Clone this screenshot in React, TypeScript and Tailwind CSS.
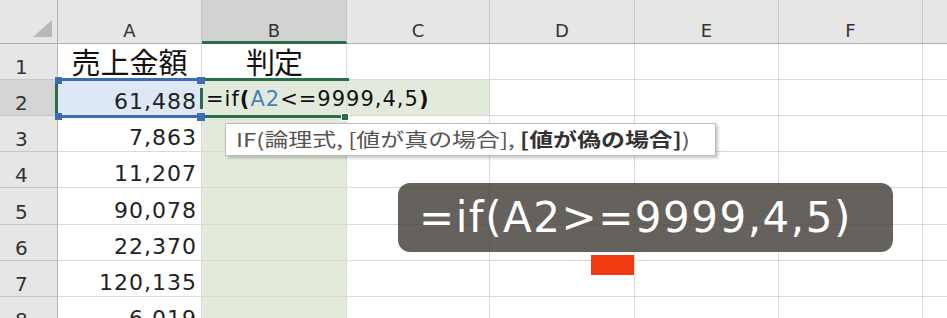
import React from "react";

const dataA = ["売上金額", "61,488", "7,863", "11,207", "90,078", "22,370", "120,135", "6,019"];
const letters = ["A", "B", "C", "D", "E", "F", ""];

const numFont = { fontFamily: '"DejaVu Sans", "Liberation Sans", sans-serif' };
const cjkFont = { fontFamily: '"Noto Sans CJK JP", "Noto Sans", sans-serif' };

function HeaderRow() {
  return (
    <>
      <div className="relative bg-[#e6e6e6] border-r border-b border-r-[#b4b4b4] border-b-[#adadad]">
        <svg className="absolute left-[33px] top-[20px]" width="19" height="17" viewBox="0 0 19 17">
          <polygon points="19,0 19,17 0,17" fill="#b8b8b8" />
        </svg>
      </div>
      {letters.map((l, i) => (
        <div
          key={i}
          className={
            l === "B"
              ? "flex items-end justify-center pb-[1px] bg-[#d2d2d2] border-r border-r-[#c4c4c4] border-b-[3px] border-b-[#2a6d47] text-[18px] leading-none text-[#333]"
              : "flex items-end justify-center pb-[3px] bg-[#e6e6e6] border-r border-r-[#c8c8c8] border-b border-b-[#adadad] text-[18px] leading-none text-[#333]"
          }
          style={numFont}
        >
          {l}
        </div>
      ))}
    </>
  );
}

function Row({ n }: { n: number }) {
  const isSel = n === 2;
  const a = dataA[n - 1];
  return (
    <>
      <div
        className={
          isSel
            ? "flex items-end pl-[15px] pb-[2px] bg-[#d4d4d4] border-r-[3px] border-r-[#2a6d47] border-b border-b-[#c4c4c4] text-[20px] leading-none text-[#333]"
            : "flex items-end pl-[15px] pb-[2px] bg-[#e6e6e6] border-r border-r-[#b4b4b4] border-b border-b-[#c8c8c8] text-[20px] leading-none text-[#333]"
        }
        style={numFont}
      >
        {n}
      </div>
      {n === 1 ? (
        <div
          className="flex items-start justify-center pt-[3px] border-r border-b border-[#d9d9d9] bg-white text-[29px] leading-none text-[#111] whitespace-nowrap overflow-visible"
          style={cjkFont}
        >
          {a}
        </div>
      ) : (
        <div
          className={
            (isSel ? "bg-[#dde7f5] " : "bg-white ") +
            "flex items-end justify-end pr-[4px] pb-[2px] border-r border-b border-[#d9d9d9] text-[22px] leading-none tracking-[1px] text-[#222] whitespace-nowrap"
          }
          style={numFont}
        >
          {a}
        </div>
      )}
      {n === 1 ? (
        <div
          className="flex items-start justify-center pt-[3px] border-r border-b border-[#d9d9d9] bg-white text-[29px] leading-none text-[#111] tracking-[-1px]"
          style={cjkFont}
        >
          判定
        </div>
      ) : isSel ? (
        <div
          className="relative z-10 flex items-start pl-[4px] pt-[9px] border-r border-b border-[#d9d9d9] bg-[#e2ebdb] text-[21px] leading-none tracking-[1px] text-[#111] whitespace-nowrap"
          style={numFont}
        >
          <span>=if</span>
          <span className="font-bold">(</span>
          <span className="text-[#4a7ebf]">A2</span>
          <span>&lt;=9999,4,5</span>
          <span className="font-bold">)</span>
        </div>
      ) : (
        <div className="border-r border-b border-[#d9d9d9] bg-[#e2ebdb]" />
      )}
      <div className={(isSel ? "bg-[#e2ebdb] " : "bg-white ") + "border-r border-b border-[#d9d9d9]"} />
      <div className="bg-white border-r border-b border-[#d9d9d9]" />
      <div className="bg-white border-r border-b border-[#d9d9d9]" />
      <div className="bg-white border-r border-b border-[#d9d9d9]" />
      <div className="bg-white border-r border-b border-[#d9d9d9]" />
    </>
  );
}

export default function App() {
  return (
    <div className="relative w-[947px] h-[318px] overflow-hidden bg-white">
      <div className="grid grid-cols-[58px_144px_145px_143px_145px_144px_144px_144px] grid-rows-[44px_36px_36px_36px_36px_37px_36px_36px_36px]">
        <HeaderRow />
        {[1, 2, 3, 4, 5, 6, 7, 8].map((n) => (
          <Row key={n} n={n} />
        ))}
      </div>

      {/* A2 reference highlight (blue) */}
      <div className="absolute left-[60px] top-[78px] w-[142px] h-[40px] border-t-[3px] border-b-[3px] border-[#3c6db5] z-20" />
      <div className="absolute left-[55px] top-[77px] w-[7px] h-[7px] bg-[#3c6db5] z-30" />
      <div className="absolute left-[55px] top-[113px] w-[7px] h-[7px] bg-[#3c6db5] z-30" />

      {/* B2 active cell (green) */}
      <div className="absolute left-[203px] top-[78px] w-[146px] h-[3px] bg-[#2a6d47] z-20" />
      <div className="absolute left-[205px] top-[115px] w-[137px] h-[3px] bg-[#2a6d47] z-20" />
      <div className="absolute left-[341px] top-[113px] w-[8px] h-[8px] bg-[#2a6d47] border border-white z-30" />
      <div className="absolute left-[200px] top-[88px] w-[3px] h-[21px] bg-[#2a6d47] z-20" />
      <div className="absolute left-[197px] top-[77px] w-[8px] h-[7px] bg-[#3c6db5] z-30" />
      <div className="absolute left-[197px] top-[113px] w-[8px] h-[8px] bg-[#3c6db5] z-30" />

      {/* Tooltip */}
      <div className="absolute left-[225px] top-[123px] w-[491px] h-[33px] bg-white border border-[#bdbdbd] shadow-[2px_2px_3px_rgba(0,0,0,0.22)] z-30 overflow-hidden">
        <div
          className="inline-block origin-left scale-x-[1.26] pl-[8px] pt-[5px] text-[19px] leading-none whitespace-nowrap text-[#555]"
          style={cjkFont}
        >
          IF(論理式, [値が真の場合], <span className="font-bold text-[#333]">[値が偽の場合]</span>)
        </div>
      </div>

      {/* Caption */}
      <div className="absolute left-[398px] top-[183px] w-[495px] h-[69px] rounded-[12px] bg-[rgba(72,67,62,0.84)] z-40 pl-[21px] pt-[14px]">
        <div className="text-[42px] leading-none tracking-[1.5px] text-white whitespace-nowrap" style={numFont}>
          =if(A2&gt;=9999,4,5)
        </div>
      </div>

      {/* red marker */}
      <div className="absolute left-[591px] top-[255px] w-[43px] h-[20px] bg-[#f03a0f] z-40" />
    </div>
  );
}
